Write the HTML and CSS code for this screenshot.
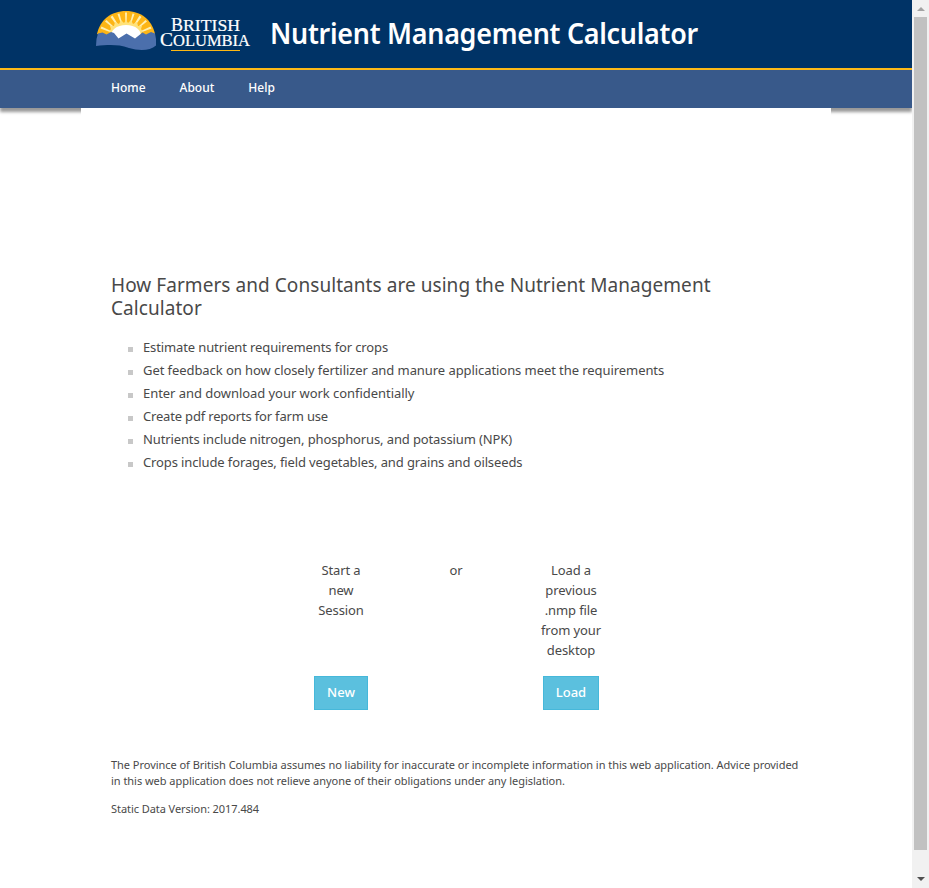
FILE: index.html
```html
<!DOCTYPE html>
<html lang="en">
<head>
<meta charset="utf-8">
<title>Nutrient Management Calculator</title>
<link rel="stylesheet" href="styles.css">
</head>
<body>
<div class="page">
  <header class="header">
    <svg class="logo" viewBox="0 0 156 44" width="156" height="44" role="img" aria-label="British Columbia">
      <path fill="#fdb515" d="M1 24C4 10 15 1 30 1S56 10 59 24L30 34Z"/>
      <path fill="#ffefb0" d="M30 28L4.500 18.500L5.500 16.500ZM30 28L9 11.500L10.500 10ZM30 28L14.500 7L16.500 5.500ZM30 28L21.500 4L23.500 3.500ZM30 28L29 2.500H31ZM30 28L36.500 3.500L38.500 4ZM30 28L43.500 5.500L45.500 7ZM30 28L49.500 10L51 11.500ZM30 28L54.500 16.500L55.500 18.500Z"/>
      <path fill="#ffe27a" d="M30 28L13 22L15 19L14 16L18 16L19 12L23 14L25 10L28 13L30 10L32 13L35 10L37 14L41 12L42 16L46 16L45 19L47 22Z"/>
      <path fill="#fff" d="M15 30C13 20 21 15 30 15S47 20 45 30Z"/>
      <path fill="#4b6fac" d="M0 36L.500 29L2 23.500L6.500 22.500L10.500 24.500L15 22L18 23L22.500 28.500L30.500 23.500L39 28.500L46.500 22.500L50 24.500L55 22L59 23.500L60 29V35.500C54 41 43 41 33 38C21 34 12 35 0 36Z"/>
      <g class="wordmark">
        <text x="75" y="21" font-size="19" textLength="12" lengthAdjust="spacingAndGlyphs">B</text>
        <text x="87" y="21" font-size="16" textLength="57" lengthAdjust="spacingAndGlyphs">RITISH</text>
        <text x="64" y="36" font-size="19" textLength="13" lengthAdjust="spacingAndGlyphs">C</text>
        <text x="77" y="36" font-size="16" textLength="77" lengthAdjust="spacingAndGlyphs">OLUMBIA</text>
      </g>
      <path fill="#fdb813" d="M75 40h69v1H75z"/>
    </svg>
    <h1 class="title">Nutrient Management Calculator</h1>
  </header>
  <nav class="nav">
    <a>Home</a><a>About</a><a>Help</a>
  </nav>
  <main class="content">
    <h2 class="heading">How Farmers and Consultants are using the Nutrient Management<br>Calculator</h2>
    <ul class="uses">
      <li>Estimate nutrient requirements for crops</li>
      <li>Get feedback on how closely fertilizer and manure applications meet the requirements</li>
      <li>Enter and download your work confidentially</li>
      <li>Create pdf reports for farm use</li>
      <li>Nutrients include nitrogen, phosphorus, and potassium (NPK)</li>
      <li>Crops include forages, field vegetables, and grains and oilseeds</li>
    </ul>
    <div class="choices">
      <div class="choice"><p>Start a<br>new<br>Session</p><button>New</button></div>
      <div class="choice"><p>or</p></div>
      <div class="choice"><p>Load a<br>previous<br>.nmp file<br>from your<br>desktop</p><button>Load</button></div>
    </div>
    <footer class="legal">
      <p>The Province of British Columbia assumes no liability for inaccurate or incomplete information in this web application. Advice provided<br>in this web application does not relieve anyone of their obligations under any legislation.</p>
      <p>Static Data Version: 2017.484</p>
    </footer>
  </main>
</div>
<aside class="scrollbar"><i class="up"></i><i class="thumb"></i><i class="down"></i></aside>
</body>
</html>
```
FILE: styles.css
```css
* { box-sizing: border-box; }
body {
  margin: 0;
  height: 888px;
  display: flex;
  overflow: hidden;
  background: #fff;
  color: #494949;
  font: 13px/20px "Noto Sans", sans-serif;
}
h1, h2, p, ul { margin: 0; padding: 0; font-weight: 400; }
.page { width: 912px; }
.header {
  height: 70px;
  display: flex;
  padding: 10px 0 0 96px;
  background: #036;
  border-bottom: 2px solid #fcba19;
}
.wordmark { fill: #fff; stroke: #fff; stroke-width: .2; font-family: "Liberation Serif", serif; }
.title {
  margin-left: 18px;
  color: #fff;
  font-size: 29px;
  line-height: 46px;
  font-weight: 650;
  letter-spacing: -.3px;
  white-space: nowrap;
  transform: scaleX(.928);
  transform-origin: 0 0;
}
.nav {
  height: 38px;
  display: flex;
  gap: 34px;
  padding-left: 111px;
  background: #38598a;
  box-shadow: 0 4px 3px #999;
  color: #fff;
  font-size: 12px;
  font-weight: 500;
  line-height: 35px;
}
.content {
  position: relative;
  width: 750px;
  height: 780px;
  margin-left: 81px;
  padding: 166px 30px 0;
  background: #fff;
  white-space: nowrap;
}
.heading { font-size: 19px; line-height: 23px; letter-spacing: .06px; }
.uses { margin-top: 15px; list-style: none; letter-spacing: -.12px; }
.uses li {
  display: flex;
  align-items: center;
  gap: 10px;
  height: 23px;
  padding-left: 17px;
}
.uses li:nth-child(2) { letter-spacing: -.07px; }
.uses li:nth-child(3) { letter-spacing: -.05px; }
.uses li:nth-child(4) { letter-spacing: -.18px; }
.uses li::before { content: ""; width: 5px; height: 5px; margin-top: 5px; background: #c8c8c8; }
.choices { display: flex; justify-content: center; margin-top: 87px; height: 150px; letter-spacing: -.1px; }
.choice { width: 115px; display: flex; flex-direction: column; align-items: center; justify-content: space-between; text-align: center; }
button {
  height: 34px;
  padding: 0 12px 2px;
  border: 1px solid #46b8da;
  background: #5bc0de;
  color: #fff;
  font: 500 13px/30px "Noto Sans", sans-serif;
}
.legal { margin-top: 47px; font-size: 11px; line-height: 16px; letter-spacing: -.035px; }
.legal p + p { margin-top: 12px; letter-spacing: -.06px; }
.scrollbar { width: 17px; display: flex; flex-direction: column; align-items: center; background: #f1f1f1; }
.up { margin-top: 7px; border: 4px solid transparent; border-top: 0; border-bottom: 4px solid #a3a3a3; }
.thumb { width: 13px; height: 833px; margin-top: 6px; background: #c1c1c1; }
.down { margin-top: 27px; border: 4px solid transparent; border-bottom: 0; border-top: 4px solid #505050; }
```
